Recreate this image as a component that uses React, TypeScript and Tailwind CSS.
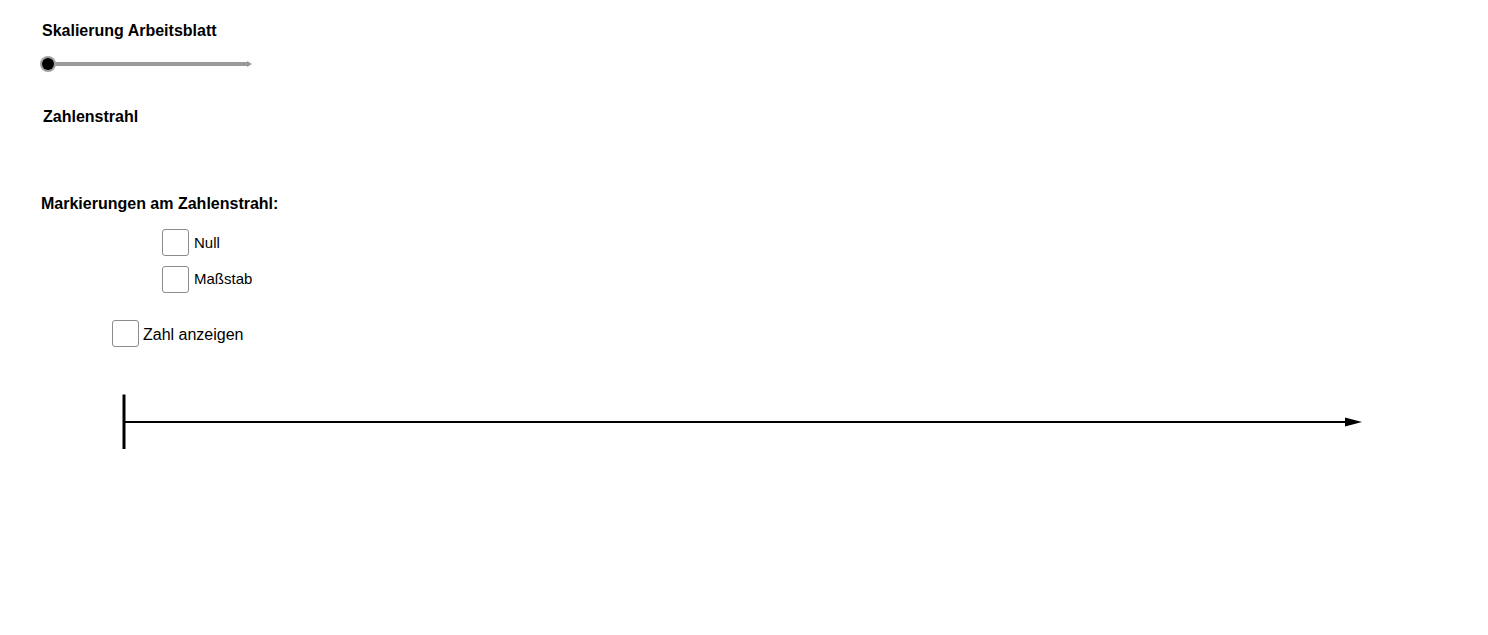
import React, { useState } from 'react';

function CheckRow({ label, checked, onToggle, className, textClass }: {
    label: string;
    checked: boolean;
    onToggle: () => void;
    className?: string;
    textClass?: string;
}) {
    return (
        <label className={`flex items-start cursor-pointer select-none ${className ?? ''}`}>
            <span
                onClick={onToggle}
                className="w-[27px] h-[27px] border border-[#8c8c8c] rounded-[3px] bg-white flex items-center justify-center shrink-0"
            >
                {checked && (
                    <svg width="18" height="18" viewBox="0 0 18 18">
                        <path d="M3 9l4 4 8-9" fill="none" stroke="#333" strokeWidth="2" />
                    </svg>
                )}
            </span>
            <span className={textClass}>{label}</span>
        </label>
    );
}

export default function App() {
    const [showNull, setShowNull] = useState(false);
    const [showScale, setShowScale] = useState(false);
    const [showNumber, setShowNumber] = useState(false);

    return (
        <div className="w-[1488px] h-[635px] bg-white text-black overflow-hidden" style={{ fontFamily: '"Liberation Sans", Arial, sans-serif' }}>
            <div className="pt-[22px] pl-[42px]">
                <div className="text-[16px] leading-[18px] font-bold">Skalierung Arbeitsblatt</div>

                {/* scale slider */}
                <div className="relative mt-[14px] h-[20px] w-[214px]">
                    <div className="absolute left-[6px] top-[8px] h-[4px] w-[201px] bg-[#9a9a9a]" />
                    <div className="absolute left-[205px] top-[7px] w-0 h-0 border-y-[3px] border-y-transparent border-l-[5px] border-l-[#9a9a9a]" />
                    <div className="absolute left-[-2px] top-[2px] w-[16px] h-[16px] rounded-full bg-[#a0a0a0] flex items-center justify-center">
                        <div className="w-[12px] h-[12px] rounded-full bg-black" />
                    </div>
                </div>

                <div className="mt-[34px] ml-px text-[16px] leading-[18px] font-bold">Zahlenstrahl</div>

                <div className="mt-[69px] -ml-px text-[16px] leading-[18px] font-bold">Markierungen am Zahlenstrahl:</div>

                <CheckRow
                    label="Null"
                    checked={showNull}
                    onToggle={() => setShowNull(!showNull)}
                    className="mt-[16px] ml-[120px]"
                    textClass="ml-[5px] pt-[5px] text-[15px] leading-[18px]"
                />
                <CheckRow
                    label="Maßstab"
                    checked={showScale}
                    onToggle={() => setShowScale(!showScale)}
                    className="mt-[10px] ml-[120px]"
                    textClass="ml-[5px] pt-[4px] text-[15px] leading-[18px]"
                />
                <CheckRow
                    label="Zahl anzeigen"
                    checked={showNumber}
                    onToggle={() => setShowNumber(!showNumber)}
                    className="mt-[27px] ml-[70px]"
                    textClass="ml-[4px] pt-[6px] text-[16px] leading-[18px]"
                />

                {/* number line */}
                <svg className="block mt-[43px] ml-[78px]" width="1250" height="65" viewBox="0 0 1250 65">
                    <line x1="4" y1="4.5" x2="4" y2="59" stroke="#000" strokeWidth="3" />
                    <line x1="4" y1="32" x2="1228" y2="32" stroke="#000" strokeWidth="2" />
                    <polygon points="1225,27.5 1242,32 1225,36.5" fill="#000" />
                </svg>
            </div>
        </div>
    );
}
